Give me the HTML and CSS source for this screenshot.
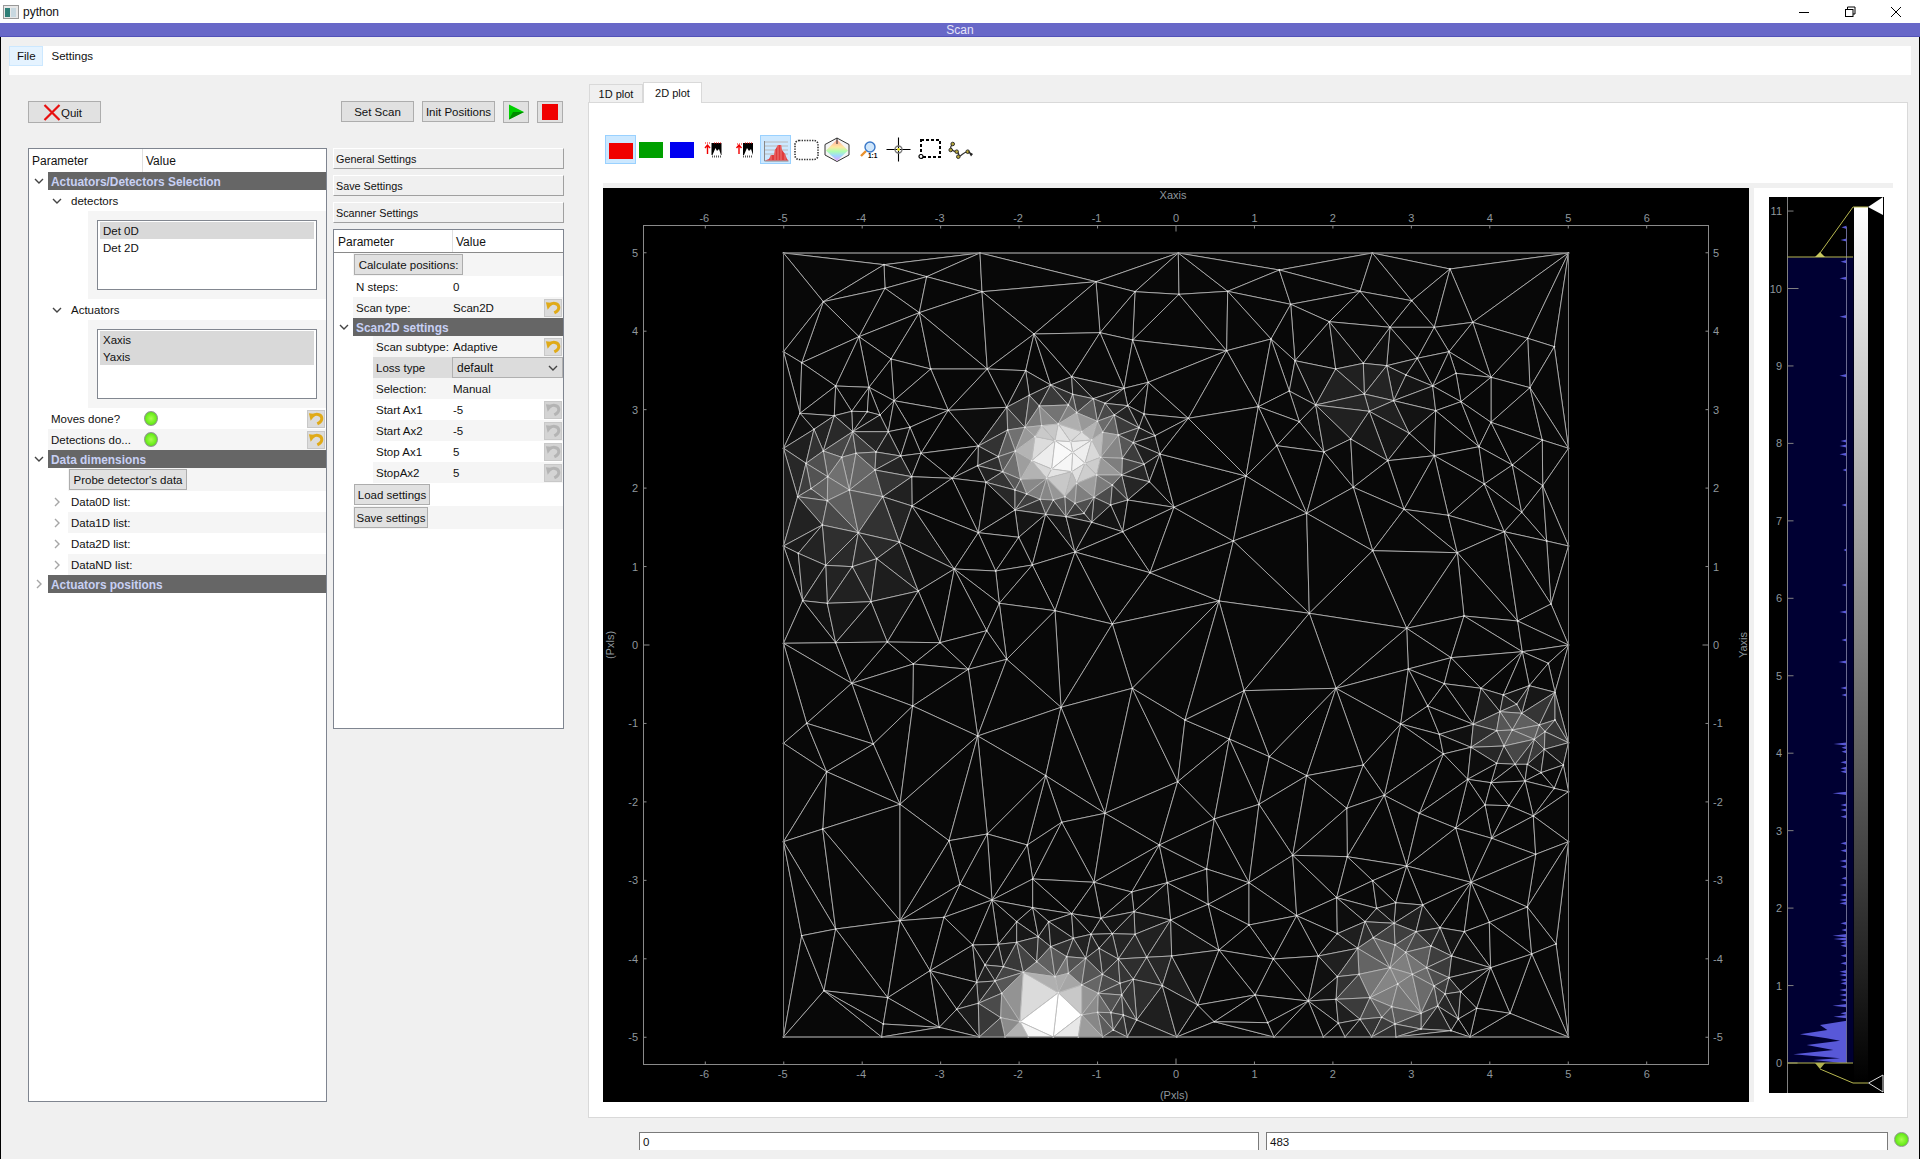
FILE: index.html
```html
<!DOCTYPE html>
<html lang="en">
<head>
    <meta charset="UTF-8">
    <title>python</title>
    <link rel="stylesheet" href="styles.css">
</head>
<body>
    <svg class="sprites" width="0" height="0">
        <symbol id="chev-down" viewBox="0 0 12 12"><path d="M2 4 L6 8 L10 4" fill="none" stroke="#444" stroke-width="1.4"/></symbol>
        <symbol id="chev-right" viewBox="0 0 12 12"><path d="M4 2 L8 6 L4 10" fill="none" stroke="#a6a6a6" stroke-width="1.4"/></symbol>
        <symbol id="undo" viewBox="0 0 18 18"><path d="M5 6 C8 2.5 15 3 15.5 8 C15.8 11 13.5 13 10.5 14.5" fill="none" stroke="currentColor" stroke-width="3.4"/><path d="M1 2.5 L9 3.5 L3 11 Z" fill="currentColor"/></symbol>
    </svg>

    <div class="titlebar">
        <svg class="app-icon" width="16" height="14" viewBox="0 0 16 14"><rect x="0.5" y="0.5" width="15" height="13" fill="#e8e8e8" stroke="#999"/><rect x="2" y="3" width="5" height="9" fill="#2f7f78"/><rect x="8" y="3" width="5" height="9" fill="#c8d8e0"/></svg>
        <span>python</span>
        <div class="win-controls">
            <svg width="12" height="12" viewBox="0 0 12 12"><path d="M1 6.5 H11" stroke="#000"/></svg>
            <svg width="12" height="12" viewBox="0 0 12 12"><path d="M3.5 3 V1 H11 V8 H9" fill="none" stroke="#000"/><rect x="1.5" y="3.5" width="7.5" height="7" fill="none" stroke="#000"/></svg>
            <svg width="12" height="12" viewBox="0 0 12 12"><path d="M1 1 L11 11 M11 1 L1 11" stroke="#000"/></svg>
        </div>
    </div>
    <div class="scan-strip">Scan</div>

    <div class="app">
        <div class="menubar">
            <span class="menu-item active">File</span>
            <span class="menu-item">Settings</span>
        </div>

        <div class="main">
            <div class="left-pane">
                <div class="actions">
                    <button class="btn quit-btn">
                        <svg width="18" height="17" viewBox="0 0 18 17"><path d="M1.5 1 L16.5 16 M16.5 1 L1.5 16" stroke="#e81010" stroke-width="2.2"/></svg>
                        Quit
                    </button>
                    <button class="btn scan-btn">Set Scan</button>
                    <button class="btn init-btn">Init Positions</button>
                    <button class="btn icon-btn">
                        <svg width="17" height="16" viewBox="0 0 17 16"><path d="M1 0.5 L16 8 L1 15.5 Z" fill="#00d000"/><path d="M1 15.5 L16 8 L5 8 Z" fill="#008a00"/></svg>
                    </button>
                    <button class="btn icon-btn">
                        <span class="stop-square"></span>
                    </button>
                </div>

                <div class="trees">
                    <div class="tree tree-main">
                        <div class="tree-head"><span class="col-param">Parameter</span><span class="col-value">Value</span></div>

                        <div class="row section"><span class="arrow"><svg width="12" height="12"><use href="#chev-down"/></svg></span><div class="cell">Actuators/Detectors Selection</div></div>
                        <div class="row lv1"><span class="arrow"><svg width="12" height="12"><use href="#chev-down"/></svg></span><div class="cell"><span class="name">detectors</span></div></div>
                        <div class="list-row">
                            <div class="listbox">
                                <div class="list-item selected">Det 0D</div>
                                <div class="list-item">Det 2D</div>
                            </div>
                        </div>
                        <div class="row lv1"><span class="arrow"><svg width="12" height="12"><use href="#chev-down"/></svg></span><div class="cell"><span class="name">Actuators</span></div></div>
                        <div class="list-row">
                            <div class="listbox">
                                <div class="list-item selected">Xaxis</div>
                                <div class="list-item selected">Yaxis</div>
                            </div>
                        </div>
                        <div class="row lv0"><span class="arrow"></span><div class="cell"><span class="name">Moves done?</span><span class="led"></span><button class="revert"><svg width="16" height="16"><use href="#undo"/></svg></button></div></div>
                        <div class="row lv0 alt"><span class="arrow"></span><div class="cell"><span class="name">Detections do...</span><span class="led"></span><button class="revert"><svg width="16" height="16"><use href="#undo"/></svg></button></div></div>
                        <div class="row section"><span class="arrow"><svg width="12" height="12"><use href="#chev-down"/></svg></span><div class="cell">Data dimensions</div></div>
                        <div class="row lv1 alt btn-row"><span class="arrow"></span><div class="cell"><button class="btn row-btn probe-btn">Probe detector's data</button></div></div>
                        <div class="row lv1"><span class="arrow"><svg width="12" height="12"><use href="#chev-right"/></svg></span><div class="cell"><span class="name">Data0D list:</span></div></div>
                        <div class="row lv1 alt"><span class="arrow"><svg width="12" height="12"><use href="#chev-right"/></svg></span><div class="cell"><span class="name">Data1D list:</span></div></div>
                        <div class="row lv1"><span class="arrow"><svg width="12" height="12"><use href="#chev-right"/></svg></span><div class="cell"><span class="name">Data2D list:</span></div></div>
                        <div class="row lv1 alt"><span class="arrow"><svg width="12" height="12"><use href="#chev-right"/></svg></span><div class="cell"><span class="name">DataND list:</span></div></div>
                        <div class="row section"><span class="arrow"><svg width="12" height="12"><use href="#chev-right"/></svg></span><div class="cell">Actuators positions</div></div>
                    </div>

                    <div class="side">
                        <button class="side-btn">General Settings</button>
                        <button class="side-btn">Save Settings</button>
                        <button class="side-btn">Scanner Settings</button>

                        <div class="tree tree-scan">
                            <div class="tree-head"><span class="col-param">Parameter</span><span class="col-value">Value</span></div>

                            <div class="row lv0 alt btn-row"><span class="arrow"></span><div class="cell"><button class="btn row-btn calc-btn">Calculate positions:</button></div></div>
                            <div class="row lv0"><span class="arrow"></span><div class="cell"><span class="name">N steps:</span><span class="value">0</span></div></div>
                            <div class="row lv0 alt"><span class="arrow"></span><div class="cell"><span class="name">Scan type:</span><span class="value">Scan2D</span><button class="revert"><svg width="16" height="16"><use href="#undo"/></svg></button></div></div>
                            <div class="row section"><span class="arrow"><svg width="12" height="12"><use href="#chev-down"/></svg></span><div class="cell">Scan2D settings</div></div>
                            <div class="row lv1 alt"><span class="arrow"></span><div class="cell"><span class="name">Scan subtype:</span><span class="value">Adaptive</span><button class="revert"><svg width="16" height="16"><use href="#undo"/></svg></button></div></div>
                            <div class="row lv1 picked"><span class="arrow"></span><div class="cell"><span class="name">Loss type</span><div class="combo">default<svg width="12" height="12"><use href="#chev-down"/></svg></div></div></div>
                            <div class="row lv1 alt"><span class="arrow"></span><div class="cell"><span class="name">Selection:</span><span class="value">Manual</span></div></div>
                            <div class="row lv1"><span class="arrow"></span><div class="cell"><span class="name">Start Ax1</span><span class="value">-5</span><button class="revert off"><svg width="16" height="16"><use href="#undo"/></svg></button></div></div>
                            <div class="row lv1 alt"><span class="arrow"></span><div class="cell"><span class="name">Start Ax2</span><span class="value">-5</span><button class="revert off"><svg width="16" height="16"><use href="#undo"/></svg></button></div></div>
                            <div class="row lv1"><span class="arrow"></span><div class="cell"><span class="name">Stop Ax1</span><span class="value">5</span><button class="revert off"><svg width="16" height="16"><use href="#undo"/></svg></button></div></div>
                            <div class="row lv1 alt"><span class="arrow"></span><div class="cell"><span class="name">StopAx2</span><span class="value">5</span><button class="revert off"><svg width="16" height="16"><use href="#undo"/></svg></button></div></div>
                            <div class="row lv0 btn-row"><span class="arrow"></span><div class="cell"><button class="btn row-btn load-btn">Load settings</button></div></div>
                            <div class="row lv0 alt btn-row"><span class="arrow"></span><div class="cell"><button class="btn row-btn save-btn">Save settings</button></div></div>
                        </div>
                    </div>
                </div>
            </div>

            <div class="tabs">
                <div class="tabbar">
                    <div class="tab">1D plot</div>
                    <div class="tab active">2D plot</div>
                </div>
                <div class="tab-pane">
                    <div class="toolbar">
                        <div class="tool on"><span class="swatch swatch-red"></span></div>
                        <div class="tool"><span class="swatch swatch-green"></span></div>
                        <div class="tool"><span class="swatch swatch-blue"></span></div>
                        <div class="tool">
                            <svg viewBox="0 0 31 29" width="31" height="29"><path d="M7 8 H13" stroke="#f00000" stroke-dasharray="1 1"/><rect x="13.5" y="8" width="10" height="12" fill="#000"/><path d="M14.5 20 L17.5 13 L19 16 L21 14 L23 20 Z" fill="#fff"/><path d="M14 21.5 H24" stroke="#555" stroke-width="2" stroke-dasharray="1 1"/><path d="M9.5 19 V11 M7 13 L9.5 10 L12 13" fill="none" stroke="#f00000" stroke-width="1.4"/><path d="M16 8 H24" stroke="#f00000" stroke-dasharray="1 1"/></svg>
                        </div>
                        <div class="tool">
                            <svg viewBox="0 0 31 29" width="31" height="29"><rect x="14" y="8" width="10" height="12" fill="#000"/><path d="M15 20 L18 13 L20 16 L22 14 L24 20 Z" fill="#fff"/><path d="M14 21.5 H24" stroke="#555" stroke-width="2" stroke-dasharray="1 1"/><path d="M10 19 V11 M7.5 13 L10 10 L12.5 13" fill="none" stroke="#f00000" stroke-width="1.4"/><path d="M8 9 H13" stroke="#f00000" stroke-dasharray="1 1"/><path d="M16 8 H24" stroke="#f00000" stroke-dasharray="1 1"/></svg>
                        </div>
                        <div class="tool on">
                            <svg viewBox="0 0 31 29" width="31" height="29"><path d="M4 7 H28 M4 11 H28 M4 15 H28 M4 19 H28" stroke="#b8b8b8"/><path d="M4.5 6 V26 H28.5" fill="none" stroke="#888"/><path d="M5 25.5 L9 24 L11 20 L14 20 L15 15 L18 10 L21 10 L22 15 L25 19 L27 24 L28.5 25.5 Z" fill="#e03c3c"/><path d="M11 20 V25 M15 15 V25 M18 10 V25 M21 10 V25 M25 19 V25" stroke="#f08a8a" stroke-width="0.8"/></svg>
                        </div>
                        <div class="tool">
                            <svg viewBox="0 0 31 29" width="31" height="29"><rect x="4" y="5.5" width="23" height="19" rx="4" fill="none" stroke="#333" stroke-width="1.6" stroke-dasharray="1.4 1.2"/></svg>
                        </div>
                        <div class="tool">
                            <svg viewBox="0 0 31 29" width="31" height="29">
                                <defs>
                                    <linearGradient id="gem" x1="0" y1="0" x2="0" y2="1"><stop offset="0" stop-color="#ffa0a0"/><stop offset="0.35" stop-color="#ffe8a0"/><stop offset="0.55" stop-color="#b0ffb0"/><stop offset="0.75" stop-color="#a0d8ff"/><stop offset="1" stop-color="#e8a0ff"/></linearGradient>
                                </defs>
                                <path d="M15 3 L27 9.5 V20 L15 26.5 L3 20 V9.5 Z" fill="#f4f4f4" stroke="#333" stroke-width="1"/>
                                <path d="M15 4.5 L26 15.5 L15 26 L4 15.5 Z" fill="url(#gem)"/>
                                <path d="M15 3 V9" stroke="#222"/>
                            </svg>
                        </div>
                        <div class="tool">
                            <svg viewBox="0 0 31 29" width="31" height="29"><path d="M13 16 L8 21" stroke="#e8902c" stroke-width="2.4"/><circle cx="17" cy="12" r="5" fill="#cfe6fb" stroke="#3a78c8" stroke-width="1.4"/><text x="15" y="23" class="tool-text">1:1</text></svg>
                        </div>
                        <div class="tool">
                            <svg viewBox="0 0 31 29" width="31" height="29"><path d="M2.5 14.5 H26.5 M14.5 2.5 V26.5" stroke="#000" stroke-width="1.1"/><circle cx="14.5" cy="14.5" r="3.5" fill="none" stroke="#777" stroke-width="1.4"/><circle cx="14.5" cy="14.5" r="1.4" fill="#e8e020"/></svg>
                        </div>
                        <div class="tool">
                            <svg viewBox="0 0 31 29" width="31" height="29"><rect x="6" y="5" width="19" height="17" fill="none" stroke="#000" stroke-width="2" stroke-dasharray="3 2"/><circle cx="6" cy="21.5" r="2" fill="#fff" stroke="#000" stroke-width="1.2"/></svg>
                        </div>
                        <div class="tool">
                            <svg viewBox="0 0 31 29" width="31" height="29"><path d="M7 9 C2 13 6 16 11 17 C15 19 11 23 14 21 C17 19 19 16 23 17" fill="none" stroke="#333" stroke-width="1.2"/><g fill="#b8a838" stroke="#222" stroke-width="0.9"><circle cx="6.7" cy="9" r="1.8"/><circle cx="4.7" cy="15" r="1.8"/><circle cx="10.7" cy="16.7" r="1.8"/><circle cx="12.3" cy="21.7" r="1.8"/><circle cx="21.7" cy="16.7" r="1.8"/></g><path d="M22 16 L27 19 L25 21.5 Z" fill="#222"/></svg>
                        </div>
                    </div>

                    <div class="plot-wrap">
                        <div class="plot-frame">
                            <svg id="plot" class="plot" viewBox="603 188 1146 914" width="1146" height="914"></svg>
                        </div>
                        <svg id="hist" class="hist" viewBox="1769 197 115 896" width="115" height="896">
                            <defs>
                                <linearGradient id="ramp" x1="0" y1="0" x2="0" y2="1"><stop offset="0" stop-color="#fff"/><stop offset="1" stop-color="#000"/></linearGradient>
                            </defs>
                        </svg>
                    </div>
                </div>
            </div>
        </div>

        <div class="statusbar">
            <div class="field field-wide">0</div>
            <div class="field field-count">483</div>
            <span class="led status-led"></span>
        </div>
    </div>

    <script src="plot.js"></script>
</body>
</html>
```

FILE: styles.css
```css
* {
    box-sizing: border-box;
}

body {
    margin: 0;
    width: 1920px;
    height: 1159px;
    overflow: hidden;
    background-color: #f0f0f0;
    font-family: "Liberation Sans", Arial, sans-serif;
    font-size: 11.5px;
    color: #111;
    display: flex;
    flex-direction: column;
}

button {
    font-family: inherit;
    font-size: inherit;
    color: inherit;
    padding: 0;
}

.sprites {
    position: absolute;
}

.titlebar {
    height: 23px;
    background-color: #fff;
    display: flex;
    align-items: center;
    padding-left: 3px;
    flex-shrink: 0;
    font-size: 12px;
}

.app-icon {
    margin-right: 4px;
}

.win-controls {
    margin-left: auto;
    display: flex;
    gap: 34px;
    padding-right: 18px;
}

.scan-strip {
    height: 14px;
    flex-shrink: 0;
    background-color: #6868c8;
    border-bottom: 1px solid #5252b8;
    color: #e4e4f8;
    font-size: 12px;
    line-height: 15px;
    text-align: center;
}

.app {
    flex: 1;
    min-height: 0;
    border-left: 1px solid #000;
    border-right: 1px solid #000;
    padding: 9px 8px 0;
    display: flex;
    flex-direction: column;
}

.menubar {
    height: 29px;
    flex-shrink: 0;
    background-color: #fff;
    display: flex;
    align-items: flex-start;
}

.menu-item {
    height: 20px;
    line-height: 19px;
    padding: 0 8px;
    border: 1px solid transparent;
}

.menu-item.active {
    padding: 0 6px 0 7px;
    background-color: #e5f3ff;
    border-color: #cce8ff;
}

.main {
    height: 1043px;
    flex-shrink: 0;
    padding-left: 19px;
    display: flex;
    gap: 24px;
}

.left-pane {
    width: 536px;
    padding-top: 26px;
}

.actions {
    height: 22px;
    display: flex;
    align-items: flex-start;
    gap: 8px;
    padding-right: 1px;
}

.btn {
    background-color: #e1e1e1;
    border: 1px solid #adadad;
    height: 21px;
    display: flex;
    align-items: center;
    justify-content: center;
}

.quit-btn {
    width: 73px;
    height: 22px;
    margin-right: auto;
    padding: 1px 4px 0 0;
}

.scan-btn,
.init-btn {
    width: 73px;
}

.icon-btn {
    width: 26px;
    height: 22px;
}

.stop-square {
    width: 16px;
    height: 16px;
    background-color: #f00000;
}

.trees {
    margin-top: 25px;
    display: flex;
    gap: 6px;
    align-items: flex-start;
}

.tree {
    background-color: #fff;
    border: 1px solid #7f8590;
}

.tree-main {
    width: 299px;
    height: 954px;
}

.side {
    width: 231px;
    display: flex;
    flex-direction: column;
}

.side-btn {
    height: 21px;
    margin-bottom: 6px;
    text-align: left;
    padding-left: 2px;
    font-size: 10.8px;
    background-color: #f0f0f0;
    border: 1px solid #fff;
    border-right-color: #a0a0a0;
    border-bottom-color: #a0a0a0;
}

.tree-scan {
    height: 500px;
}

.tree-head {
    height: 23px;
    display: flex;
    align-items: center;
    font-size: 12px;
}

.tree-scan .tree-head {
    border-bottom: 1px solid #8a8a8a;
}

.col-param {
    width: 114px;
    height: 100%;
    line-height: 24px;
    padding-left: 3px;
    border-right: 1px solid #e0e0e0;
}

.tree-scan .col-param {
    width: 119px;
    padding-left: 4px;
}

.col-value {
    padding: 1px 0 0 3px;
}

.row {
    height: 21px;
    display: flex;
}

.arrow {
    width: 19px;
    flex-shrink: 0;
    display: flex;
    align-items: center;
    justify-content: center;
}

.lv1 .arrow {
    width: 39px;
    justify-content: flex-end;
    padding-right: 5px;
}

.cell {
    flex: 1;
    min-width: 0;
    display: flex;
    align-items: center;
}

.alt .cell {
    background-color: #f5f5f5;
}

.name {
    flex-shrink: 0;
    padding: 1px 0 0 3px;
    width: 94px;
    white-space: nowrap;
}

.lv1 .name {
    width: 74px;
}

.tree-scan .lv0 .name {
    width: 99px;
}

.tree-scan .lv1 .name {
    width: 79px;
}

.value {
    padding: 1px 0 0 1px;
}

.section {
    height: 18px;
    font-weight: bold;
    font-size: 11.9px;
}

.section .cell {
    background-color: #666;
    color: #c8d0f4;
    padding: 1px 0 0 3px;
}

.btn-row {
    height: 23px;
}

.row-btn {
    height: 21px;
}

.probe-btn {
    width: 118px;
    margin-left: 1px;
}

.calc-btn {
    width: 109px;
    margin-left: 1px;
}

.load-btn {
    width: 76px;
    margin-left: 1px;
}

.save-btn {
    width: 74px;
    margin-left: 1px;
}

.list-row {
    height: 88px;
    margin-left: 59px;
    background-color: #f5f5f5;
    padding: 9px 9px 0;
}

.listbox {
    height: 70px;
    background-color: #fff;
    border: 1px solid #828790;
    padding: 1px 2px;
}

.list-item {
    height: 17px;
    line-height: 19px;
    padding-left: 3px;
    font-size: 11.5px;
}

.list-item.selected {
    background-color: #d9d9d9;
}

.led {
    display: inline-block;
    width: 14px;
    height: 15px;
    margin-left: 2px;
    border-radius: 50%;
    border: 1px solid #909890;
    background: radial-gradient(circle at 50% 50%, #a8ff50 0%, #70ee20 55%, #48c810 100%);
}

.revert {
    width: 18px;
    height: 18px;
    margin-left: auto;
    margin-right: 1px;
    background-color: #dcdcdc;
    border: 1px solid #c8c8c8;
    color: #e0aa18;
    display: flex;
    align-items: center;
    justify-content: center;
}

.revert.off {
    background-color: #d4d4d4;
    color: #b4b4b4;
}

.picked .name {
    align-self: stretch;
    line-height: 21px;
    background-color: #dcdcdc;
}

.combo {
    flex: 1;
    height: 21px;
    background-color: #dcdcdc;
    border: 1px solid #b0b0b0;
    padding: 0 3px 0 4px;
    font-size: 12px;
    display: flex;
    align-items: center;
    justify-content: space-between;
}

.tabs {
    width: 1320px;
    margin-top: 7px;
    display: flex;
    flex-direction: column;
}

.tabbar {
    height: 20px;
    display: flex;
    align-items: flex-end;
    padding-left: 1px;
    font-size: 11px;
}

.tab {
    width: 54px;
    height: 18px;
    line-height: 18px;
    text-align: center;
    background-color: #f0f0f0;
    border: 1px solid #d9d9d9;
    border-bottom: 0;
}

.tab.active {
    width: 59px;
    height: 21px;
    line-height: 20px;
    background-color: #fff;
    margin-bottom: -1px;
    position: relative;
}

.tab-pane {
    height: 1016px;
    background-color: #fff;
    border: 1px solid #d9d9d9;
    padding: 32px 0 0 14px;
}

.toolbar {
    height: 29px;
    margin-left: 2px;
    margin-bottom: 19px;
    display: flex;
}

.tool {
    width: 31px;
    height: 29px;
    flex-shrink: 0;
    border: 1px solid transparent;
    display: flex;
    align-items: center;
    justify-content: center;
}

.tool svg {
    margin: -1px;
    flex-shrink: 0;
}

.tool.on {
    background-color: #cce8ff;
    border-color: #99d1ff;
}

.tool-text {
    font-size: 6.5px;
    font-weight: bold;
}

.swatch {
    width: 24px;
    height: 16px;
    margin-right: 1px;
}

.swatch-red {
    background-color: #f00000;
    margin: 3px 0 0;
}

.swatch-green {
    background-color: #00a000;
}

.swatch-blue {
    background-color: #0000f0;
}

.plot-wrap {
    width: 1290px;
    border-top: 5px solid #f0f0f0;
    display: flex;
    align-items: flex-start;
}

.plot-frame {
    border-right: 5px solid #f0f0f0;
    height: 914px;
}

.plot {
    display: block;
    background-color: #000;
}

.hist {
    display: block;
    margin: 9px 0 0 15px;
    background-color: #000;
}

.plot text,
.hist text {
    font-family: "Liberation Sans", Arial, sans-serif;
    font-size: 11px;
    fill: #8f979d;
}

.statusbar {
    height: 18px;
    margin-top: 14px;
    margin-left: 630px;
    display: flex;
    align-items: flex-start;
    gap: 7px;
}

.field {
    height: 18px;
    background-color: #fff;
    border: 1px solid #7a7a7a;
    border-bottom: 0;
    padding-left: 3px;
    line-height: 19px;
}

.field-wide {
    width: 620px;
}

.field-count {
    width: 622px;
}

.status-led {
    width: 15px;
    height: 15px;
    margin-left: -1px;
}
```

FILE: plot.js
```js
// 2D scan plot: points traced from the adaptive scan, triangulated with Bowyer-Watson.
const SVG_NS = 'http://www.w3.org/2000/svg';

const LEFT = 783.5, RIGHT = 1568.5, TOP = 253, BOTTOM = 1037;
const CENTER_X = 1176, CENTER_Y = 645, UNIT = 78.45;

// points in 3x crop coordinates, one list per quadrant
const quadrants = [
    {x: 780, y: 250, pts: [
        [12,8],[312,44],[440,80],[600,8],[948,95],[1195,8],[1065,125],[1197,133],[130,155],[315,115],[606,125],[418,188],[762,252],[960,248],[1058,270],
        [237,260],[14,305],[65,338],[333,327],[452,357],[622,357],[737,362],[875,380],[812,405],[1032,415],[1105,397],[167,408],[267,412],[748,436],[878,433],[940,446],[342,452],[60,490],[163,497],[215,484],[262,485],[300,495],[505,481],[680,472],[778,468],[865,465],[975,460],[1043,467],[1092,492],[890,488],[1003,495],
        [102,538],[218,545],[325,545],[390,532],[683,540],[735,532],[785,527],[835,522],[952,514],[905,545],[968,547],[1015,555],[1077,533],[1125,557],
        [14,595],[130,603],[228,610],[185,622],[288,606],[362,618],[423,610],[595,588],[706,603],[765,560],[825,572],[872,575],[935,570],[1060,578],[1140,612],[655,620],
        [78,640],[143,680],[285,660],[208,720],[395,680],[516,685],[593,647],[668,665],[722,688],[755,632],[878,607],[962,622],[1027,625],[1092,643],[815,657],[875,665],[915,640],[950,675],[1025,675],[618,697],[1108,695],[800,685],[890,700],[997,705],
        [53,740],[93,716],[142,752],[308,740],[396,768],[705,720],[740,732],[780,748],[820,750],[855,740],[942,742],[992,765],[1043,750],[1182,772],[885,760],[935,817],[705,780],[797,793],[858,800],[912,790],[1028,845],
        [127,825],[235,848],[358,876],[595,848],[716,862],[15,888],[55,910],[137,946],[217,950],[290,926],[885,906],[523,957],[647,963],[757,945],[1110,968],
        [415,1023],[68,1052],[142,1060],[273,1055],[658,1060],[825,1082],[997,1122],[620,1142],[12,1180],[167,1178],[322,1176],[480,1178]
    ]},
    {x: 1175, y: 250, pts: [
        [313,60],[592,8],[825,57],[1178,8],[158,124],[555,124],[347,163],[710,152],[463,215],[645,232],[778,232],[893,217],[288,267],[155,302],[1058,265],[1138,290],[822,305],[727,325],[360,332],[565,340],[635,347],[482,357],[693,375],[843,370],[948,382],[773,408],[1065,413],[343,423],[568,432],[656,452],[422,465],[858,455],[250,470],[583,484],[782,482],[40,505],[373,515],[948,517],[703,550],[527,567],[305,587],[447,606],[912,590],[1102,570],[1178,595],[778,617],[638,632],[1012,645],[928,702],[1103,707],[213,678],[535,712],[687,778],[820,796],[1040,787],[395,790],[988,845],[1115,873],[1178,888],[175,873],[593,902],[847,908],[132,1053],[1128,1062],[403,1090],[867,1098],[1028,1113],[695,1135],[1178,1185]
    ]},
    {x: 780, y: 645, pts: [
        [400,57],[565,73],[680,43],[215,115],[398,183],[843,187],[1057,130],[80,235],[12,295],[280,297],[593,273],[140,380],[797,392],[1193,410],[360,478],[975,505],[845,532],[128,552],[12,590],[507,587],[622,567],[742,600],[1138,600],[540,718],[758,702],[942,712],[1162,713],[1055,741],[636,765],[758,788],[875,806],[963,820],[1062,800],[1172,825],[360,827],[492,817],[710,830],[806,830],[997,866],[1065,868],[167,852],[65,872],[578,900],[655,898],[710,892],[775,875],[880,880],[933,868],[812,905],[957,910],[1015,942],[1100,937],[1175,933],[450,977],[615,960],[670,965],[770,950],[860,935],[917,940],[730,982],[825,995],[865,985],[967,988],[1060,1003],[590,1012],[645,1008],[1147,1022],[1020,1015],[905,1020],[132,1037],[323,1058],[665,1045],[835,1043],[955,1045],[1025,1050],[595,1075],[530,1093],[905,1110],[953,1102],[993,1103],[1030,1110],[1070,1125],[662,1118],[720,1130],[310,1137],[478,1147],[12,1176],[305,1175],[598,1176],[675,1176],[745,1175],[820,1163],[895,1175],[968,1176],[1042,1176],[1190,1176],[1000,1155]
    ]},
    {x: 1175, y: 645, pts: [
        [1042,20],[828,38],[700,72],[1120,55],[808,116],[918,130],[1063,122],[1140,142],[207,137],[483,130],[758,183],[985,150],[1025,178],[30,225],[677,237],[895,238],[975,200],[1040,205],[1093,240],[1140,225],[163,282],[793,268],[965,257],[1012,255],[1078,283],[1110,260],[1178,293],[283,335],[805,327],[888,307],[987,303],[1108,313],[565,360],[395,392],[965,355],[1020,358],[1057,358],[1098,383],[1165,360],[878,403],[948,413],[1050,408],[1178,440],[1138,430],[628,451],[252,478],[515,490],[930,480],[1002,482],[733,505],[118,522],[1075,513],[842,549],[950,580],[1178,590],[353,631],[517,635],[1082,628],[695,663],[95,672],[888,712],[222,713],[593,707],[485,758],[662,773],[743,780],[605,790],[100,778],[1057,786],[365,812],[570,830],[657,835],[222,840],[795,848],[868,860],[943,832],[487,866],[723,860],[595,878],[548,910],[660,900],[692,922],[768,903],[132,915],[1143,897],[830,933],[1070,927],[430,933],[295,942],[645,968],[755,968],[947,968],[487,995],[552,988],[712,988],[822,998],[668,1017],[777,1023],[857,1040],[810,1047],[240,1050],[585,1058],[483,1063],[400,1068],[905,1090],[788,1083],[68,1080],[650,1085],[738,1105],[1005,1105],[620,1117],[555,1123],[118,1130],[278,1133],[850,1122],[660,1137],[490,1135],[510,1162],[297,1175],[445,1175],[590,1175],[663,1163],[738,1152],[828,1157],[885,1175],[1178,1172]
    ]}
];

// bright spots of the scan: x, y, sigma x, sigma y, amplitude, exponent
const peaks = [
    [1065, 455, 58, 48, 0.95, 2.6],
    [1050, 1018, 48, 52, 1.12, 2],
    [843, 477, 46, 44, 0.34, 2.4],
    [855, 540, 62, 80, 0.13, 3],
    [1396, 980, 50, 50, 0.5, 2.5],
    [1520, 731, 42, 28, 0.36, 2.5],
    [1365, 400, 50, 42, 0.13, 2.5],
    [1140, 975, 48, 60, 0.13, 3]
];

function el(name, attrs, parent) {
    const node = document.createElementNS(SVG_NS, name);
    for (const key in attrs) {
        node.setAttribute(key, attrs[key]);
    }
    parent.appendChild(node);
    return node;
}

function label(parent, x, y, text, anchor) {
    const node = el('text', {x: x, y: y, 'text-anchor': anchor || 'middle'}, parent);
    node.textContent = text;
    return node;
}

function loadPoints() {
    const points = [[LEFT, TOP], [RIGHT, TOP], [LEFT, BOTTOM], [RIGHT, BOTTOM]];
    quadrants.forEach(function (q) {
        q.pts.forEach(function (p) {
            let x = q.x + p[0] / 3;
            let y = q.y + p[1] / 3;
            if (x - LEFT < 5) x = LEFT;
            if (RIGHT - x < 5) x = RIGHT;
            if (y - TOP < 5) y = TOP;
            if (BOTTOM - y < 5) y = BOTTOM;
            const close = points.some(function (o) {
                return Math.abs(o[0] - x) < 3 && Math.abs(o[1] - y) < 3;
            });
            if (!close) points.push([x, y]);
        });
    });
    return points;
}

function circumcircle(a, b, c) {
    const d = 2 * (a[0] * (b[1] - c[1]) + b[0] * (c[1] - a[1]) + c[0] * (a[1] - b[1]));
    const aa = a[0] * a[0] + a[1] * a[1];
    const bb = b[0] * b[0] + b[1] * b[1];
    const cc = c[0] * c[0] + c[1] * c[1];
    const x = (aa * (b[1] - c[1]) + bb * (c[1] - a[1]) + cc * (a[1] - b[1])) / d;
    const y = (aa * (c[0] - b[0]) + bb * (a[0] - c[0]) + cc * (b[0] - a[0])) / d;
    return {x: x, y: y, r2: (a[0] - x) * (a[0] - x) + (a[1] - y) * (a[1] - y)};
}

function triangulate(points) {
    const all = points.concat([[-20000, -20000], [25000, -20000], [1000, 30000]]);
    const n = points.length;
    let tris = [{v: [n, n + 1, n + 2], c: circumcircle(all[n], all[n + 1], all[n + 2])}];

    for (let i = 0; i < n; i++) {
        const p = all[i];
        const edges = {};
        const keep = [];
        tris.forEach(function (t) {
            const dx = p[0] - t.c.x, dy = p[1] - t.c.y;
            if (dx * dx + dy * dy < t.c.r2) {
                [[t.v[0], t.v[1]], [t.v[1], t.v[2]], [t.v[2], t.v[0]]].forEach(function (e) {
                    const key = Math.min(e[0], e[1]) + '_' + Math.max(e[0], e[1]);
                    edges[key] = edges[key] ? null : e;
                });
            } else {
                keep.push(t);
            }
        });
        for (const key in edges) {
            if (edges[key]) {
                const e = edges[key];
                keep.push({v: [e[0], e[1], i], c: circumcircle(all[e[0]], all[e[1]], p)});
            }
        }
        tris = keep;
    }

    return tris.filter(function (t) {
        return t.v.every(function (i) { return i < n; });
    }).map(function (t) {
        return t.v.map(function (i) { return all[i]; });
    }).filter(function (t) {
        const area = (t[1][0] - t[0][0]) * (t[2][1] - t[0][1]) - (t[2][0] - t[0][0]) * (t[1][1] - t[0][1]);
        return Math.abs(area) > 1;
    });
}

function shade(x, y) {
    let v = 0.03;
    peaks.forEach(function (k) {
        const dx = (x - k[0]) / k[2], dy = (y - k[1]) / k[3];
        v += k[4] * Math.exp(-Math.pow(Math.sqrt(dx * dx + dy * dy), k[5]));
    });
    const g = Math.round(255 * Math.min(1, v));
    return 'rgb(' + g + ',' + g + ',' + g + ')';
}

function drawMesh(svg) {
    const points = loadPoints();
    triangulate(points).forEach(function (t) {
        const cx = (t[0][0] + t[1][0] + t[2][0]) / 3;
        const cy = (t[0][1] + t[1][1] + t[2][1]) / 3;
        el('polygon', {
            points: t.map(function (p) { return p[0].toFixed(1) + ',' + p[1].toFixed(1); }).join(' '),
            fill: shade(cx, cy),
            stroke: '#bcbcbc',
            'stroke-width': 0.8
        }, svg);
    });
    points.forEach(function (p) {
        el('circle', {cx: p[0], cy: p[1], r: 0.9, fill: '#e8e8e8'}, svg);
    });
    el('rect', {x: LEFT, y: TOP, width: RIGHT - LEFT, height: BOTTOM - TOP, fill: 'none', stroke: '#7a7a7a'}, svg);
}

function drawAxes(svg) {
    const x0 = 643.5, x1 = 1708.5, y0 = 225.5, y1 = 1064.5;
    const axis = {fill: 'none', stroke: '#8a8a8a'};
    el('rect', Object.assign({x: x0, y: y0, width: x1 - x0, height: y1 - y0}, axis), svg);

    for (let i = -6; i <= 6; i++) {
        const x = CENTER_X + i * UNIT;
        const len = i === 0 ? 6 : 3;
        el('path', Object.assign({d: 'M' + x + ' ' + y0 + 'v' + len + 'M' + x + ' ' + y1 + 'v-' + len}, axis), svg);
        label(svg, x - (i < 0 ? 1 : 0), 222, String(i));
        label(svg, x - (i < 0 ? 1 : 0), 1078, String(i));
    }
    for (let i = -5; i <= 5; i++) {
        const y = CENTER_Y - i * UNIT;
        const len = i === 0 ? 6 : 3;
        el('path', Object.assign({d: 'M' + x0 + ' ' + y + 'h' + len + 'M' + x1 + ' ' + y + 'h-' + len}, axis), svg);
        label(svg, 638, y + 4, String(i), 'end');
        label(svg, 1713, y + 4, String(i), 'start');
    }

    label(svg, 1173, 199, 'Xaxis');
    label(svg, 1174, 1099, '(Pxls)');
    label(svg, 0, 0, '(Pxls)').setAttribute('transform', 'translate(614 645) rotate(-90)');
    label(svg, 0, 0, 'Yaxis').setAttribute('transform', 'translate(1747 645) rotate(-90)');
}

// histogram spikes: crop y, spike length
const spikesTop = [[172,5],[210,6],[275,6],[325,7],[440,7],[617,7],[813,6],[828,7],[853,7]];
const spikesBottom = [[132,13],[143,5],[155,5],[187,6],[205,6],[215,6],[280,14],[315,6],[330,6],[350,6],[430,6],[452,6],[483,7],[500,6],[535,5],[555,7],[585,6],[600,7],[610,7],[670,6],[690,5],[707,14],[717,13],[727,6],[737,6],[767,6],[790,6],[815,7],[825,7],[840,6],[850,6],[870,7],[885,7],[900,6],[917,14],[940,6],[950,13]];
const spikesMiddle = [[470,4],[505,5],[550,3],[585,5],[612,7],[640,5],[662,8],[688,6],[695,5]];
const blob = [[320,962],[240,975],[262,990],[180,1003],[260,1015],[300,1022],[200,1035],[280,1050],[160,1063],[300,1075],[220,1080],[300,1088],[320,1088]];

function drawHist(svg) {
    const base = 1846.5, zero = 1063, step = 77.45;

    el('rect', {x: 1787.5, y: 257, width: 66, height: zero - 257, fill: '#000033'}, svg);

    const spikes = spikesTop.map(function (s) { return [170 + s[0] / 3, s[1]]; })
        .concat(spikesMiddle)
        .concat(spikesBottom.map(function (s) { return [700 + s[0] / 3, s[1]]; }));
    spikes.forEach(function (s) {
        el('polygon', {
            points: base + ',' + (s[0] - 1.6) + ' ' + (base - s[1]) + ',' + s[0] + ' ' + base + ',' + (s[0] + 1.6),
            fill: '#5858d8'
        }, svg);
    });
    el('polygon', {
        points: blob.map(function (p) { return (1740 + p[0] / 3) + ',' + (700 + p[1] / 3); }).join(' '),
        fill: '#5858d8'
    }, svg);
    el('path', {d: 'M' + base + ' 227V' + zero, stroke: '#6a6a90', fill: 'none'}, svg);

    el('rect', {x: 1854, y: 207, width: 14, height: 876, fill: 'url(#ramp)'}, svg);

    el('path', {d: 'M1787.5 197V1093', stroke: '#808080', fill: 'none'}, svg);
    for (let i = 0; i <= 11; i++) {
        const y = zero - i * step;
        const len = i === 10 ? 11 : (i === 0 ? 10 : 6);
        el('path', {d: 'M1787.5 ' + y + 'h' + len, stroke: '#808080', fill: 'none'}, svg);
        label(svg, 1782, y + 4, String(i), 'end');
    }

    const yellow = {fill: 'none', stroke: '#b8b850'};
    el('path', Object.assign({d: 'M1787.5 257H1853M1853 207H1868M1853 207L1820 253'}, yellow), svg);
    el('path', Object.assign({d: 'M1787.5 1063H1853M1820 1069L1853 1083H1868'}, yellow), svg);
    el('polygon', {points: '1820,252 1815,257 1825,257', fill: '#c8c860'}, svg);
    el('polygon', {points: '1820,1069 1815,1063 1825,1063', fill: '#b0b050'}, svg);

    el('polygon', {points: '1868,207 1883,197 1883,215', fill: '#fff'}, svg);
    el('polygon', {points: '1868.5,1083 1883,1075 1883,1092', fill: '#000', stroke: '#e0e0e0'}, svg);
}

drawMesh(document.getElementById('plot'));
drawAxes(document.getElementById('plot'));
drawHist(document.getElementById('hist'));
```
